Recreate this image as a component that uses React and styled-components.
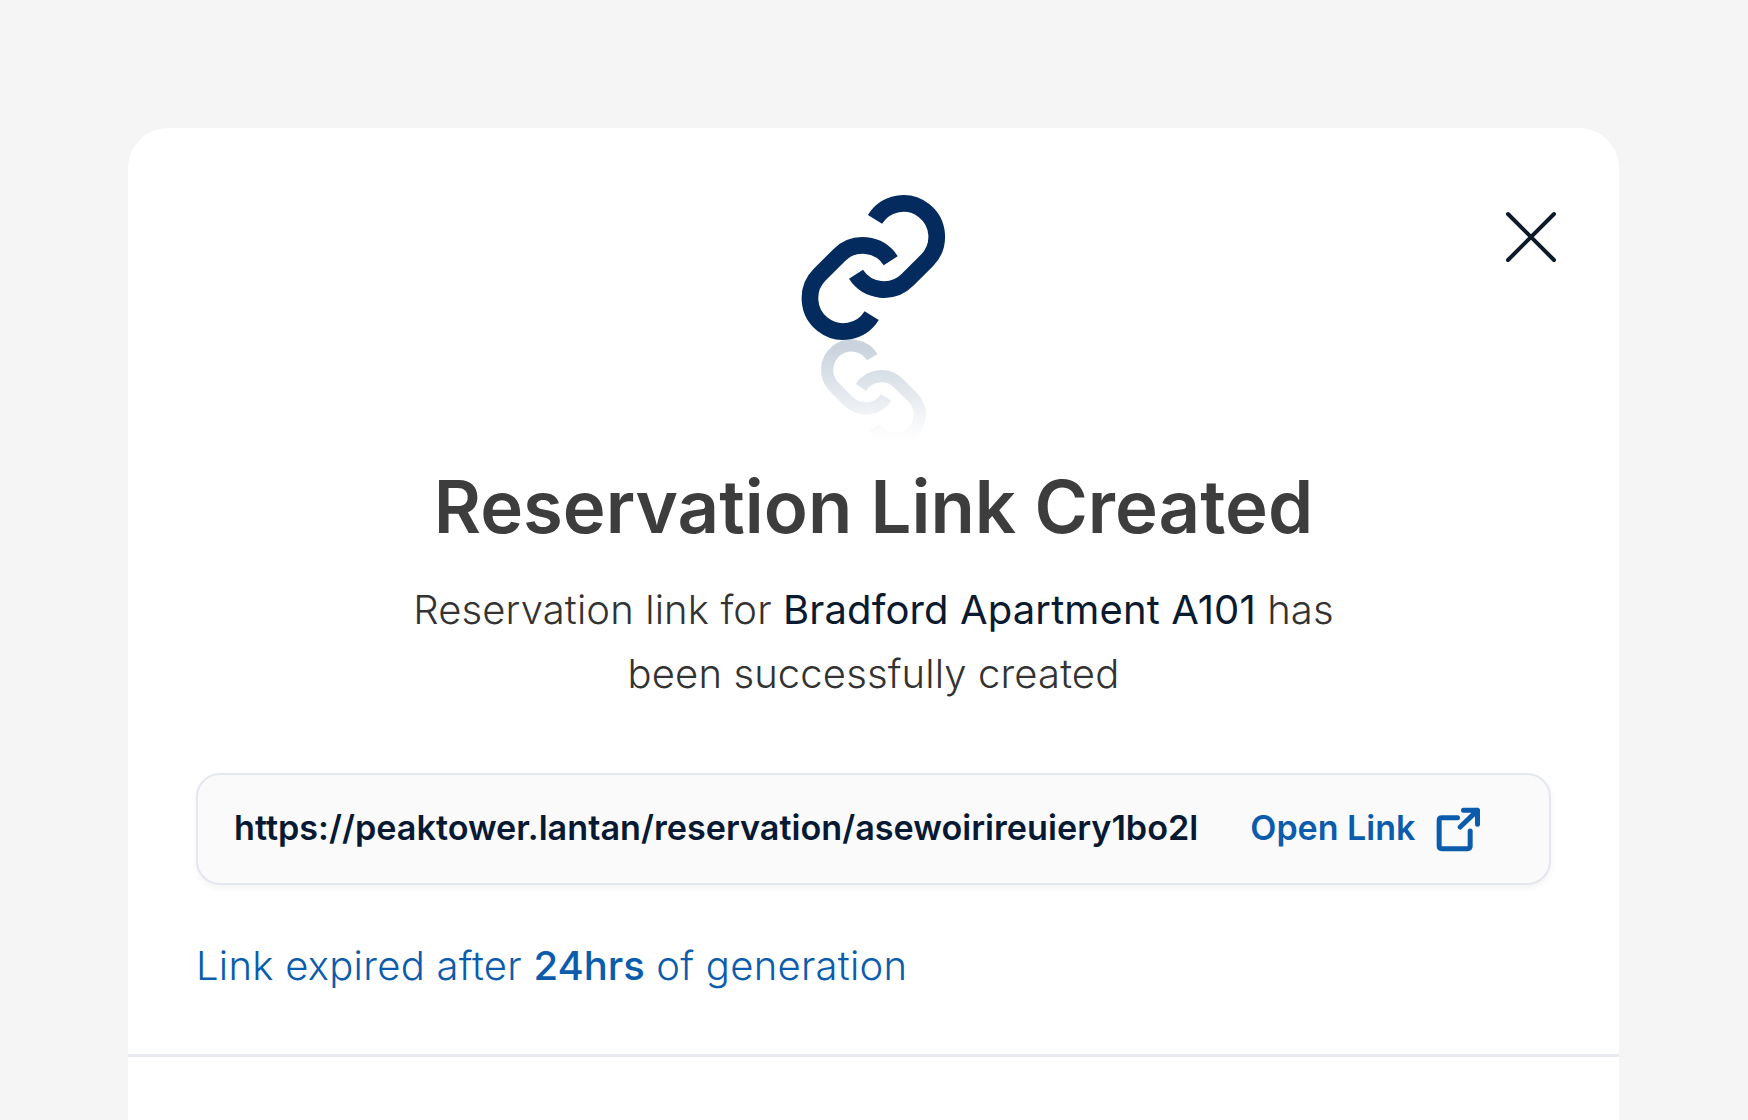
import React from 'react'
import styled, { createGlobalStyle } from 'styled-components'

const GlobalStyle = createGlobalStyle`
  html, body {
    margin: 0;
    height: 100%;
    overflow: hidden;
    background: #f5f5f5;
    font-family: Inter, "Liberation Sans", sans-serif;
  }
`

function ChainPaths() {
  return (
    <g fill="none" stroke="#032b5e" strokeWidth="50">
      <path d="M345 148 A100 100 0 1 1 501 271 L443 329 A100 100 0 0 1 288 313" />
      <path d="M335 437 A100 100 0 1 1 179 314 L237 256 A100 100 0 0 1 392 272" />
    </g>
  )
}

export default function App() {
  return (
    <Page>
      <GlobalStyle />
      <Card>
        <CloseButton aria-label="Close">
          <svg width="52" height="52" viewBox="0 0 52 52" fill="none" stroke="#0d1a2b" strokeWidth="4" strokeLinecap="round">
            <path d="M3 3 L49 49 M49 3 L3 49" />
          </svg>
        </CloseButton>
        <Body>
          <IconStack>
            <ChainIcon viewBox="102 60 480 480"><ChainPaths /></ChainIcon>
            <ChainReflection viewBox="100 60 480 480"><ChainPaths /></ChainReflection>
          </IconStack>
          <Title>Reservation Link Created</Title>
          <Message>
            Reservation link for <strong>Bradford Apartment A101</strong> has<br />
            been successfully created
          </Message>
          <LinkBox>
            <LinkUrl>https://peaktower.lantan/reservation/asewoirireuiery1bo2l</LinkUrl>
            <OpenLink href="#">
              Open Link
              <svg width="47" height="45" viewBox="765 140 140 135" fill="none" stroke="#0b5cad" strokeWidth="15" strokeLinecap="round" strokeLinejoin="round">
                <path d="M832 172 H785 Q777 172 777 180 V257 Q777 265 785 265 H862 Q870 265 870 257 V212" />
                <path d="M840 200 L892 150 M850 150 H892 V192" />
              </svg>
            </OpenLink>
          </LinkBox>
          <ExpiryNote>Link expired after <strong>24hrs</strong> of generation</ExpiryNote>
        </Body>
        <Divider />
      </Card>
    </Page>
  )
}

const Page = styled.div`
  height: 1120px;
  box-sizing: border-box;
  padding: 128px 129px 0 128px;
  overflow: hidden;
`

const Card = styled.div`
  position: relative;
  height: 1200px;
  background: #fff;
  border-radius: 40px;
`

const CloseButton = styled.button`
  position: absolute;
  top: 83px;
  right: 62px;
  padding: 0;
  border: 0;
  background: none;
  display: flex;
`

const Body = styled.div`
  display: flex;
  flex-direction: column;
  align-items: center;
  padding: 62px 68px 0;
`

const IconStack = styled.div`
  display: flex;
  flex-direction: column;
  align-items: center;
`

const ChainIcon = styled.svg`
  width: 160px;
  height: 160px;
`

const ChainReflection = styled.svg`
  width: 117px;
  height: 117px;
  margin-top: -18px;
  margin-bottom: -2px;
  transform: scaleY(-1);
  opacity: 0.2;
  -webkit-mask-image: linear-gradient(to top, #000 15%, transparent 92%);
  mask-image: linear-gradient(to top, #000 15%, transparent 92%);
`

const Title = styled.h1`
  margin: 16px 0 0;
  font-size: 72.5px;
  line-height: 88px;
  font-weight: 600;
  color: #3d3d3d;
  text-align: center;
`

const Message = styled.p`
  margin: 27px 0 0;
  font-size: 40px;
  line-height: 64px;
  font-weight: 300;
  letter-spacing: 0.12px;
  color: #333;
  text-align: center;

  strong {
    font-weight: 400;
    color: #0a1a2f;
  }
`

const LinkBox = styled.div`
  align-self: stretch;
  display: flex;
  align-items: center;
  gap: 52px;
  height: 112px;
  margin-top: 67px;
  padding: 0 36px 4px;
  box-sizing: border-box;
  background: #fafafb;
  border: 2px solid #e4e8ee;
  border-radius: 24px;
  box-shadow: 0 3px 6px rgba(16, 24, 40, 0.05);
`

const LinkUrl = styled.span`
  font-size: 34.2px;
  font-weight: 600;
  color: #081a33;
  white-space: nowrap;
`

const OpenLink = styled.a`
  display: flex;
  align-items: center;
  gap: 20px;
  font-size: 34px;
  font-weight: 600;
  color: #0b5cad;
  text-decoration: none;
  white-space: nowrap;

  svg {
    margin-top: 4px;
  }
`

const ExpiryNote = styled.p`
  align-self: stretch;
  margin: 49px 0 0;
  font-size: 40px;
  line-height: 64px;
  font-weight: 300;
  letter-spacing: 0.27px;
  color: #0b5cad;

  strong {
    font-weight: 500;
    letter-spacing: 0;
  }
`

const Divider = styled.hr`
  margin: 56px 0 0;
  border: 0;
  height: 3px;
  background: #e7eaee;
`
